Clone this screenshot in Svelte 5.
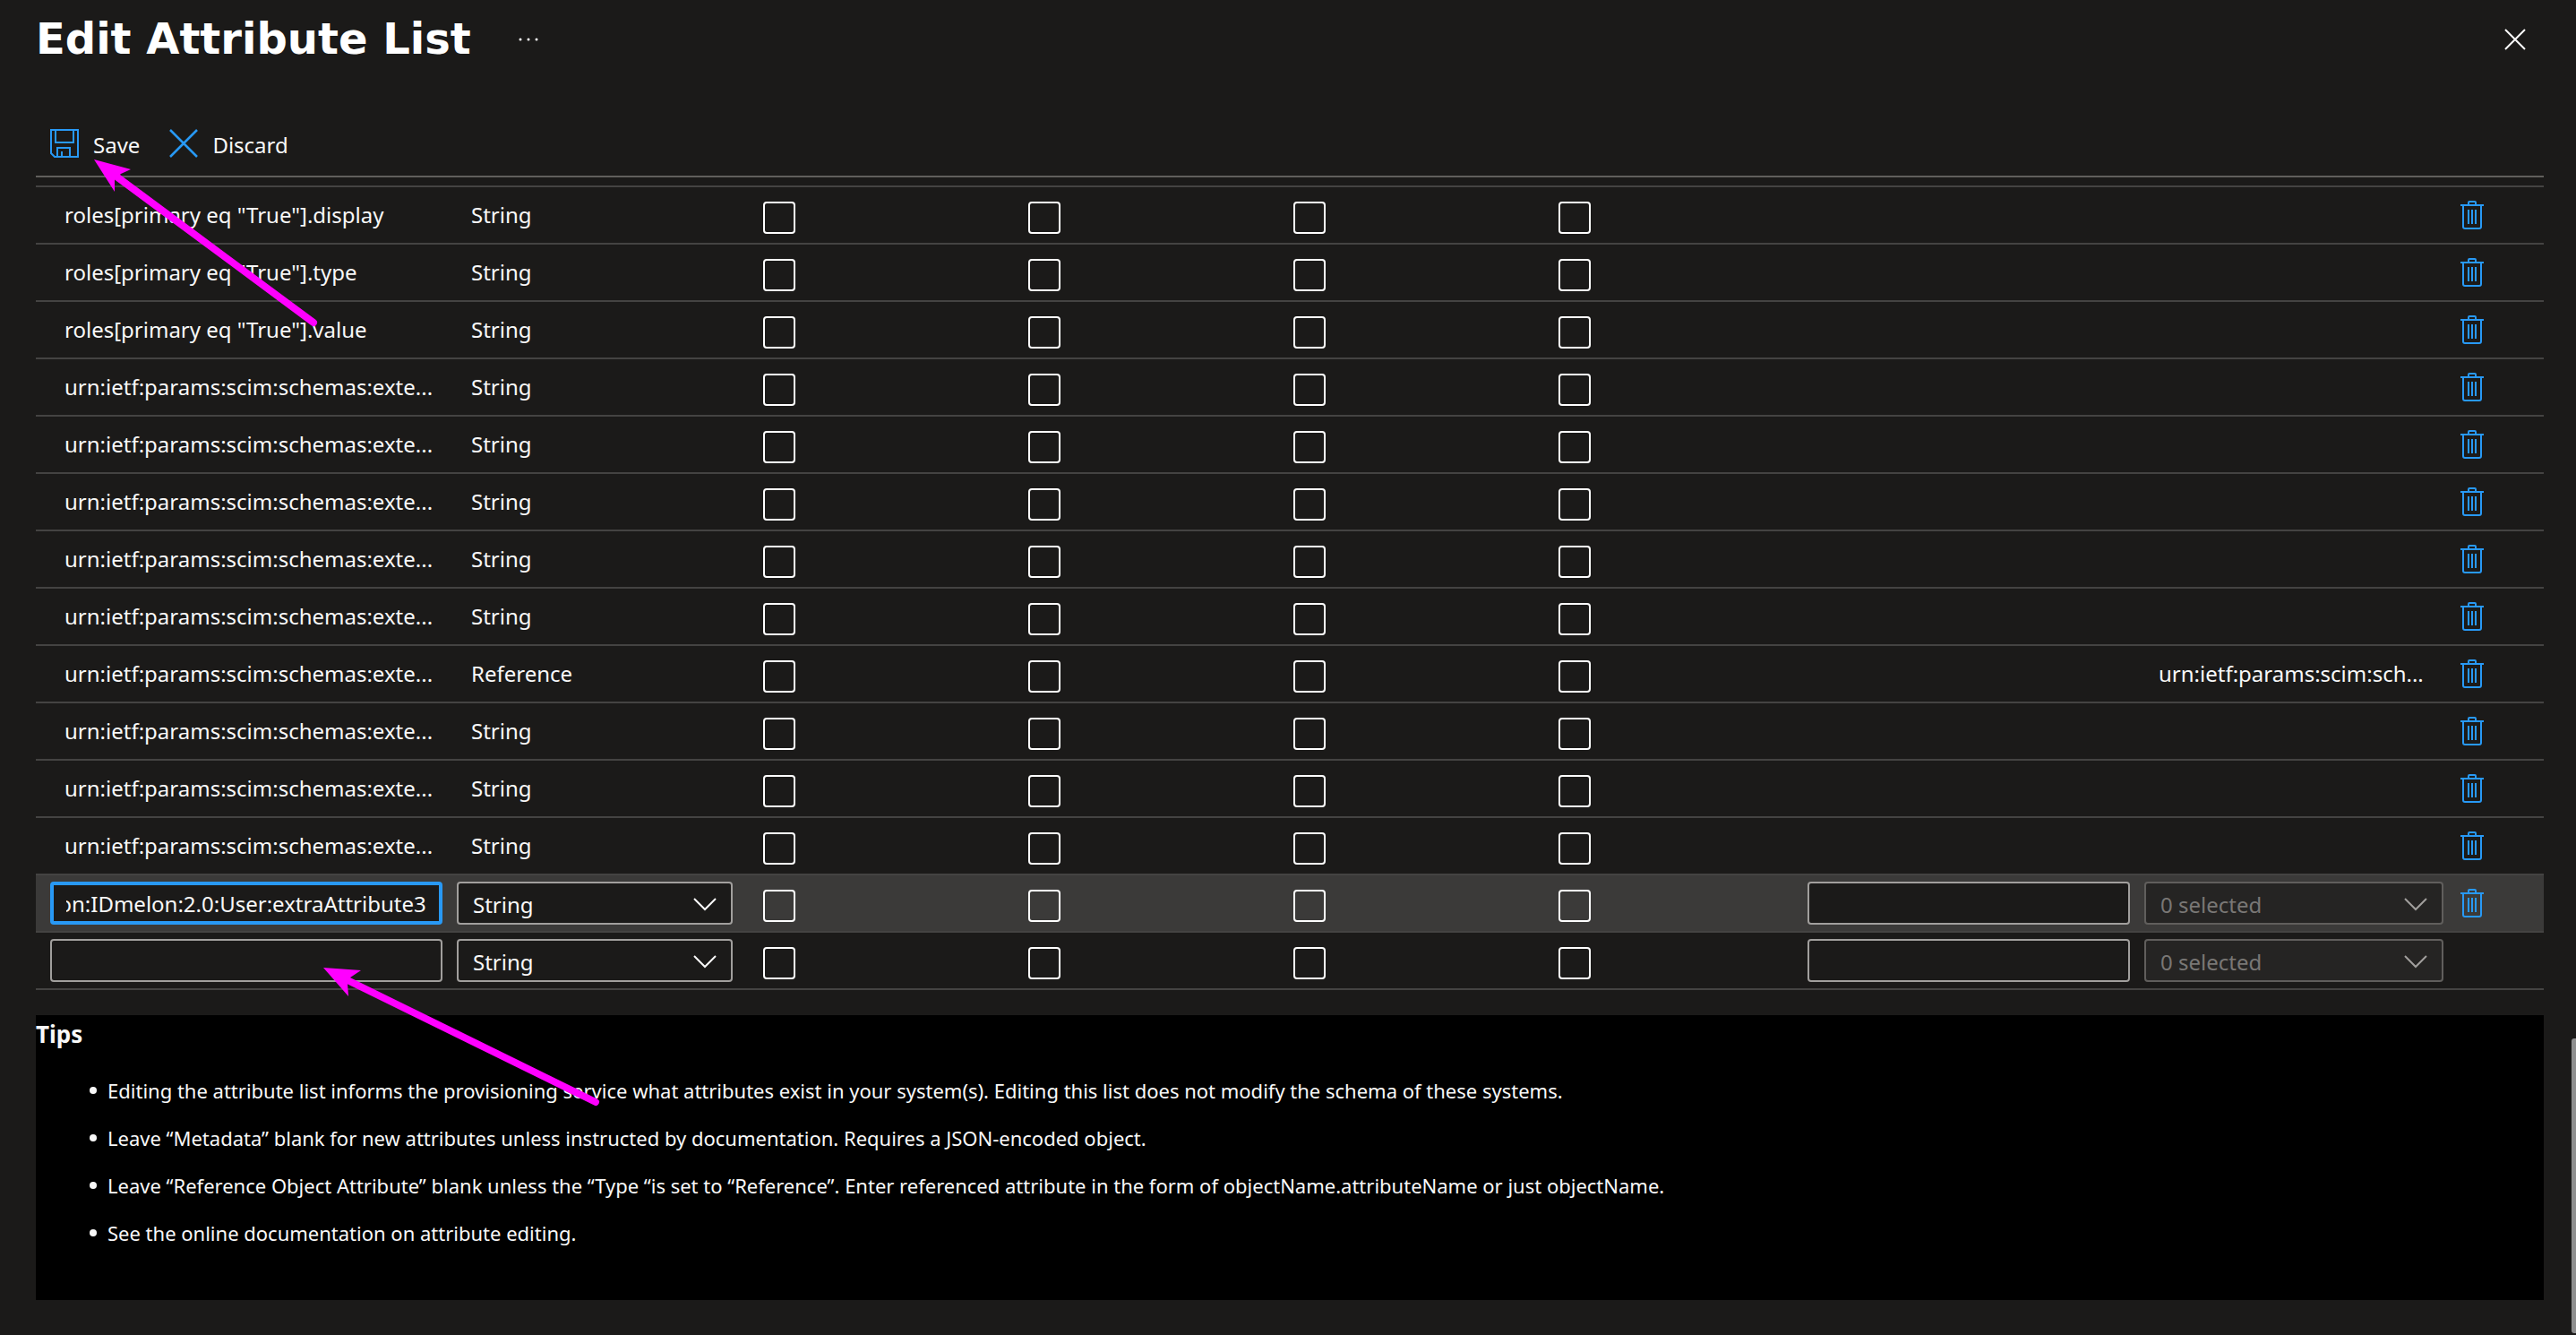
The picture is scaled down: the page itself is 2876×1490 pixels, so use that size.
<script>
  const flags = ['Primary key', 'Required', 'Multi-value', 'Exact case'];
  const urn = 'urn:ietf:params:scim:schemas:exte...';

  const rows = [
    { name: 'roles[primary eq "True"].display', type: 'String' },
    { name: 'roles[primary eq "True"].type', type: 'String' },
    { name: 'roles[primary eq "True"].value', type: 'String' },
    { name: urn, type: 'String' },
    { name: urn, type: 'String' },
    { name: urn, type: 'String' },
    { name: urn, type: 'String' },
    { name: urn, type: 'String' },
    { name: urn, type: 'Reference', ref: 'urn:ietf:params:scim:sch...' },
    { name: urn, type: 'String' },
    { name: urn, type: 'String' },
    { name: urn, type: 'String' }
  ];

  const drafts = [
    { value: 'extension:IDmelon:2.0:User:extraAttribute3', active: true },
    { value: '', active: false }
  ];

  const tips = [
    'Editing the attribute list informs the provisioning service what attributes exist in your system(s). Editing this list does not modify the schema of these systems.',
    'Leave “Metadata” blank for new attributes unless instructed by documentation. Requires a JSON-encoded object.',
    'Leave “Reference Object Attribute” blank unless the “Type “is set to “Reference”. Enter referenced attribute in the form of objectName.attributeName or just objectName.',
    'See the online documentation on attribute editing.'
  ];

  // Long names show their end, where the caret is while typing.
  function scrollToEnd(node) {
    const scroll = () => (node.scrollLeft = node.scrollWidth);
    scroll();
    requestAnimationFrame(scroll);
  }
</script>

{#snippet trash()}
  <button class="icon-button trash" aria-label="Delete attribute">
    <svg width="26" height="32" viewBox="0 0 26 32" fill="none" stroke="currentColor" stroke-width="2">
      <path d="M0 5h26M9 5V2q0-1 1-1h6q1 0 1 1v3M3 5v24q0 2 2 2h16q2 0 2-2V5M9 10v16M13 10v16M17 10v16" />
    </svg>
  </button>
{/snippet}

{#snippet chevron()}
  <svg class="chevron" width="26" height="15" viewBox="0 0 26 15" fill="none" stroke="currentColor" stroke-width="2">
    <path d="M1 1l12 12L25 1" />
  </svg>
{/snippet}

<main class="blade">
  <header class="title-bar">
    <h1>Edit Attribute List</h1>
    <button class="icon-button more" aria-label="More options">
      <svg width="24" height="4" viewBox="0 0 24 4" fill="currentColor">
        <circle cx="2" cy="2" r="1.5" /><circle cx="11" cy="2" r="1.5" /><circle cx="20" cy="2" r="1.5" />
      </svg>
    </button>
    <button class="icon-button close" aria-label="Close">
      <svg width="24" height="24" viewBox="0 0 24 24" stroke="currentColor" stroke-width="2">
        <path d="M1 1l22 22M23 1L1 23" />
      </svg>
    </button>
  </header>

  <div class="toolbar">
    <button class="command">
      <svg width="32" height="32" viewBox="0 0 32 32" fill="none" stroke="currentColor" stroke-width="2">
        <path d="M1 1h30v30H5l-4-4zM6 1v14h20V1M8 31V21h14v10M13 31v-6" />
      </svg>
      Save
    </button>
    <button class="command">
      <svg width="32" height="32" viewBox="0 0 32 32" stroke="currentColor" stroke-width="2.5">
        <path d="M1 1l30 30M31 1L1 31" />
      </svg>
      Discard
    </button>
  </div>

  <table>
    <colgroup>
      <col class="col-name" /><col class="col-type" />
      {#each flags as flag}<col />{/each}
      <col class="col-meta" /><col class="col-ref" /><col class="col-action" />
    </colgroup>
    <tbody>
      {#each rows as row}
        <tr>
          <td class="text">{row.name}</td>
          <td class="text">{row.type}</td>
          {#each flags as flag}
            <td class="check"><input type="checkbox" aria-label={flag} /></td>
          {/each}
          <td></td>
          <td class="text">{row.ref ?? ''}</td>
          <td class="action">{@render trash()}</td>
        </tr>
      {/each}
      {#each drafts as draft}
        <tr class:active={draft.active}>
          <td class="field"><input class="box" class:focused={draft.active} type="text" aria-label="Name" value={draft.value} use:scrollToEnd /></td>
          <td class="field">
            <div class="dropdown">
              <select class="box" aria-label="Type"><option>String</option><option>Reference</option></select>
              {@render chevron()}
            </div>
          </td>
          {#each flags as flag}
            <td class="check"><input type="checkbox" aria-label={flag} /></td>
          {/each}
          <td class="field"><input class="box" type="text" aria-label="Metadata" /></td>
          <td class="field">
            <div class="dropdown disabled">
              <select class="box" aria-label="Referenced objects" disabled><option>0 selected</option></select>
              {@render chevron()}
            </div>
          </td>
          <td class="action">{#if draft.active}{@render trash()}{/if}</td>
        </tr>
      {/each}
    </tbody>
  </table>

  <section class="tips">
    <h2>Tips</h2>
    <ul>
      {#each tips as tip}<li>{tip}</li>{/each}
    </ul>
  </section>

  <div class="scroll-thumb"></div>

  <svg class="arrow to-save" width="256" height="192" viewBox="0 0 256 192" aria-hidden="true">
    <path class="shaft" d="M246 182L26 19" />
    <path class="head" d="M1 0L42 11L31 16L24 22V36z" />
  </svg>
  <svg class="arrow to-field" width="320" height="160" viewBox="0 0 320 160" aria-hidden="true">
    <path class="shaft" d="M305 150L28 14" />
    <path class="head" d="M1 0L43 3L31 11L28 18L29 32z" />
  </svg>
</main>

<style>
  :global(body) {
    margin: 0;
    background: #1b1a19;
  }
  .blade {
    position: relative;
    box-sizing: border-box;
    min-height: 100vh;
    padding: 0 36px 38px 40px;
    overflow: hidden;
    background: #1b1a19;
    color: #f8f8f8;
    font-family: "Noto Sans", sans-serif;
    font-size: 24px;
    line-height: 32px;
  }
  button {
    padding: 0;
    border: 0;
    background: none;
    color: inherit;
    font: inherit;
  }
  svg {
    display: block;
  }
  .title-bar {
    display: flex;
    align-items: center;
    height: 88px;
  }
  h1 {
    margin: 0;
    padding-bottom: 2px;
    color: #fff;
    font: bold 48px/56px "DejaVu Sans", sans-serif;
  }
  .more {
    margin-left: 53px;
  }
  .close {
    margin: 0 20px 0 auto;
  }
  .toolbar {
    display: flex;
    gap: 33px;
    height: 68px;
    padding: 40px 16px 0;
    border-bottom: 2px solid #605e5c;
  }
  .command {
    display: flex;
    gap: 16px;
    height: 32px;
    margin-top: 16px;
    line-height: 36px;
  }
  .command svg {
    color: #2899f5;
  }
  table {
    width: 100%;
    margin-top: 9px;
    table-layout: fixed;
    border-spacing: 0;
    border-top: 2px solid #444342;
  }
  .col-name { width: 462px; }
  .col-type { width: 324px; }
  .col-meta { width: 376px; }
  .col-ref { width: 350px; }
  .col-action { width: 104px; }
  td {
    box-sizing: border-box;
    height: 64px;
    padding: 0;
    border-bottom: 2px solid #444342;
    vertical-align: top;
  }
  .active td {
    background: #3b3a39;
  }
  .text {
    padding: 15px 0 0 24px;
    white-space: nowrap;
  }
  td.text:first-child {
    padding-left: 32px;
  }
  .check {
    padding: 16px 0 0 26px;
  }
  .check input {
    display: block;
    appearance: none;
    width: 36px;
    height: 36px;
    margin: 0;
    border: 2px solid #fff;
    border-radius: 4px;
  }
  .action {
    padding: 15px 0 0 11px;
  }
  .trash {
    color: #2899f5;
  }
  .field {
    padding: 7px 8px 0;
  }
  .field:first-child {
    padding-left: 16px;
  }
  .box {
    display: block;
    box-sizing: border-box;
    appearance: none;
    width: 100%;
    height: 48px;
    padding: 0 16px;
    border: 2px solid #a19f9d;
    border-radius: 4px;
    outline: 0;
    background: #1b1a19;
    color: #f8f8f8;
    font: inherit;
  }
  select.box {
    padding-top: 3px;
  }
  .focused {
    padding: 0 14px;
    border: 4px solid #2899f5;
  }
  .dropdown {
    display: grid;
    align-items: center;
  }
  .dropdown > :global(*) {
    grid-area: 1 / 1;
  }
  .dropdown .chevron {
    justify-self: end;
    margin: 3px 18px 0 0;
    pointer-events: none;
  }
  .disabled .box {
    border-color: #605e5c;
    background: #252423;
    color: #797775;
    opacity: 1;
  }
  .disabled .chevron {
    color: #a19f9d;
  }
  .tips {
    box-sizing: border-box;
    min-height: 318px;
    margin-top: 28px;
    padding-bottom: 38px;
    background: #000;
  }
  h2 {
    margin: 0;
    padding-top: 5px;
    font-size: 26px;
    line-height: 32px;
  }
  ul {
    margin: 0;
    padding: 31px 0 0 60px;
    list-style: none;
    font-size: 22px;
  }
  li {
    display: flex;
    align-items: center;
    gap: 12px;
    margin-bottom: 21px;
  }
  li::before {
    flex: none;
    width: 8px;
    height: 8px;
    border-radius: 50%;
    background: #f8f8f8;
    content: "";
  }
  .scroll-thumb {
    position: absolute;
    right: 0;
    bottom: 2px;
    width: 5px;
    height: 329px;
    border-radius: 3px 0 0 3px;
    background: #8e8e8e;
  }
  .arrow {
    position: absolute;
    pointer-events: none;
  }
  .to-save {
    left: 104px;
    top: 178px;
  }
  .to-field {
    left: 360px;
    top: 1080px;
  }
  .shaft {
    fill: none;
    stroke: #f0f;
    stroke-width: 8;
    stroke-linecap: round;
  }
  .head {
    fill: #f0f;
  }
</style>
